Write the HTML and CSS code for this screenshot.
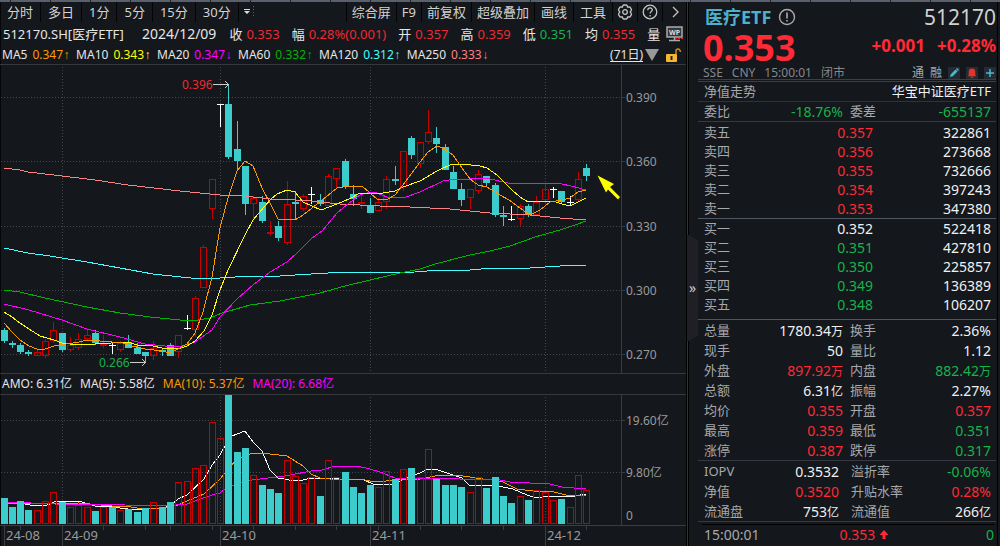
FILE: index.html
```html
<!DOCTYPE html>
<html lang="zh-CN">
<head>
<meta charset="utf-8">
<title>医疗ETF 512170</title>
<link rel="stylesheet" href="styles.css">
</head>
<body>
<div class="strip"></div>
<main class="app">
  <section class="chart">
    <nav class="toolbar">
      <button>分时</button><button>多日</button><button>1分</button><button>5分</button><button>15分</button><button>30分</button>
      <button class="more" aria-label="更多周期"><svg width="12" height="12" viewBox="0 0 12 12"><path d="M0 3h6v1H0zM0 5h6L3 8z" fill="#ddd"/><path d="M9.500 0v12" stroke="#666" stroke-dasharray="1 2"/></svg></button>
      <span class="spacer"></span>
      <button class="tight">综合屏</button><button class="tight">F9</button><button class="tight">前复权</button><button class="tight">超级叠加</button><button class="mid">画线</button><button class="mid">工具</button>
      <button class="tool" aria-label="设置"><svg width="16" height="16" viewBox="0 0 16 16" fill="none" stroke="#c4c4c4" stroke-width="1.300" stroke-linejoin="round"><path d="M5.800 1.800 6.600 1h2.800l.8.800.4 1.400 1.500-.2 1 .2 1.400 2.400-.3 1L13.200 8l1 1.400.3 1-1.400 2.400-1 .2-1.500-.2-.4 1.400-.8.800H6.600l-.8-.8-.4-1.400-1.500.2-1-.2-1.400-2.400.3-1L2.800 8l-1-1.400-.3-1 1.400-2.400 1-.2 1.500.2z"/><circle cx="8" cy="8" r="2.300"/></svg></button>
      <button class="tool" aria-label="帮助"><svg width="16" height="16" viewBox="0 0 16 16" fill="none" stroke="#c4c4c4" stroke-width="1.300"><circle cx="8" cy="8" r="6.800"/><path d="M5.800 6.200c0-3 4.500-3 4.500-.2 0 1.600-2.200 1.600-2.200 3.500M8.100 11v1.500"/></svg></button>
      <button class="tool last" aria-label="展开"><svg width="10" height="12" viewBox="0 0 10 12" fill="none" stroke="#c4c4c4" stroke-width="1.300"><path d="M2 1l5 5-5 5"/></svg></button>
    </nav>
    <div class="quote">
      <span class="code">512170.SH[医疗ETF]</span>
      <span class="date">2024/12/09</span>
      <span>收<b class="up">0.353</b></span>
      <span>幅<b class="up">0.28%(0.001)</b></span>
      <span>开<b class="up">0.357</b></span>
      <span>高<b class="up">0.359</b></span>
      <span>低<b class="down">0.351</b></span>
      <span>均<b class="up">0.355</b></span>
      <span class="amount">量<svg width="18" height="16" viewBox="0 0 18 16"><rect x="1" y="1" width="15" height="10" fill="#33363b" stroke="#aaa" stroke-width="1.500"/><text x="8.500" y="9" class="wp-text">WP</text><path d="M8.500 11v3M3 14.500h11" stroke="#aaa" stroke-width="1.500"/><path d="M9 12.500h8" stroke="#e02020" stroke-dasharray="2 1"/></svg></span>
    </div>
    <div class="averages">
      <span>MA5<b class="c-orange">0.347<i>↑</i></b></span>
      <span>MA10<b class="c-yellow">0.343<i>↑</i></b></span>
      <span>MA20<b class="c-magenta">0.347<i>↓</i></b></span>
      <span>MA60<b class="c-green">0.332<i>↑</i></b></span>
      <span>MA120<b class="c-cyan">0.312<i>↑</i></b></span>
      <span>MA250<b class="c-salmon">0.333<i>↓</i></b></span>
      <a class="range" href="#">(71日)</a>
      <svg width="42" height="16" viewBox="0 0 42 16"><path d="M1 2h14L8 14z" fill="#999"/><rect x="22" y="7" width="11" height="8" rx="1" fill="#f5b731"/><path d="M27.500 9v4" stroke="#222" stroke-width="2"/><path d="M32 7V4q0-2 2-2t2.500 3" fill="none" stroke="#c98d1c" stroke-width="1.500"/></svg>
    </div>
    <svg id="price" class="plot" viewBox="0 0 686 308" role="img" aria-label="日K线"></svg>
    <div class="amounts">
      <span>AMO: 6.31亿</span><span>MA(5): 5.58亿</span><span class="c-orange">MA(10): 5.37亿</span><span class="c-magenta">MA(20): 6.68亿</span>
    </div>
    <svg id="volume" class="plot" viewBox="0 0 686 130" role="img" aria-label="成交额"></svg>
    <svg id="dates" class="plot" viewBox="0 0 686 21" role="img" aria-label="日期"></svg>
  </section>

  <div class="splitter"><button class="fold" aria-label="收起">»</button></div>

  <aside class="side">
    <header class="head">
      <div class="line name-line"><h1>医疗ETF</h1><svg width="18" height="18" viewBox="0 0 18 18" fill="none" stroke="#aaa" stroke-width="1.400"><circle cx="9" cy="9" r="7.500"/><path d="M9 4.500v6M9 12v1.600" stroke-width="1.600"/></svg><span class="symbol">512170</span></div>
      <div class="line price-line"><strong class="last-price">0.353</strong><strong class="change">+0.001</strong><strong class="change">+0.28%</strong></div>
      <div class="line meta-line"><span>SSE</span><span>CNY</span><span>15:00:01</span><span>闭市</span><span class="tag first">通</span><span class="tag">融</span>
        <button class="chip" aria-label="编辑"><svg width="12" height="12" viewBox="0 0 12 12"><path d="M2 10l.8-2.800L7.500 2.500l2 2L4.800 9.200zM8 2l1-1 2 2-1 1z" fill="#43bdd0"/></svg></button>
        <button class="chip" aria-label="提醒"><svg width="12" height="12" viewBox="0 0 12 12"><path d="M6 1.500c2.500 0 3.300 1.700 3.300 3.500v3l1 1.200H1.700L2.700 8V5C2.700 3.200 3.500 1.500 6 1.500zM4.800 9.800h2.400v1H4.800z" fill="#e0352b"/></svg></button>
        <button class="chip" aria-label="添加"><svg width="12" height="12" viewBox="0 0 12 12"><path d="M6 2v8M2 6h8" stroke="#43bdd0" stroke-width="1.500"/></svg></button>
      </div>
    </header>
    <div class="row nav-row"><span>净值走势</span><span class="white">华宝中证医疗ETF</span></div>
    <table class="stats one"><tr><th>委比</th><td class="down">-18.76%</td><th>委差</th><td class="down">-655137</td></tr></table>
    <table class="book">
      <tr><th>卖五</th><td class="up">0.357</td><td>322861</td></tr>
      <tr><th>卖四</th><td class="up">0.356</td><td>273668</td></tr>
      <tr><th>卖三</th><td class="up">0.355</td><td>732666</td></tr>
      <tr><th>卖二</th><td class="up">0.354</td><td>397243</td></tr>
      <tr><th>卖一</th><td class="up">0.353</td><td>347380</td></tr>
    </table>
    <table class="book bids">
      <tr><th>买一</th><td>0.352</td><td>522418</td></tr>
      <tr><th>买二</th><td class="down">0.351</td><td>427810</td></tr>
      <tr><th>买三</th><td class="down">0.350</td><td>225857</td></tr>
      <tr><th>买四</th><td class="down">0.349</td><td>136389</td></tr>
      <tr><th>买五</th><td class="down">0.348</td><td>106207</td></tr>
    </table>
    <table class="stats">
      <tr><th>总量</th><td>1780.34<small>万</small></td><th>换手</th><td>2.36%</td></tr>
      <tr><th>现手</th><td>50</td><th>量比</th><td>1.12</td></tr>
      <tr><th>外盘</th><td class="up">897.92<small>万</small></td><th>内盘</th><td class="down">882.42<small>万</small></td></tr>
      <tr><th>总额</th><td>6.31<small>亿</small></td><th>振幅</th><td>2.27%</td></tr>
      <tr><th>均价</th><td class="up">0.355</td><th>开盘</th><td class="up">0.357</td></tr>
      <tr><th>最高</th><td class="up">0.359</td><th>最低</th><td class="down">0.351</td></tr>
      <tr><th>涨停</th><td class="up">0.387</td><th>跌停</th><td class="down">0.317</td></tr>
    </table>
    <table class="stats fund">
      <tr><th>IOPV</th><td>0.3532</td><th>溢折率</th><td class="down">-0.06%</td></tr>
      <tr><th>净值</th><td class="up">0.3520</td><th>升贴水率</th><td class="up">0.28%</td></tr>
      <tr><th>流通盘</th><td>753<small>亿</small></td><th>流通值</th><td>266<small>亿</small></td></tr>
    </table>
    <div class="tick"><span>15:00:01</span><span class="up tick-price">0.353</span><svg width="10" height="10" viewBox="0 0 10 10"><path d="M5 0l4.500 5H6.500v4h-3V5H.5z" fill="#ff2a35"/></svg><span class="down tick-size">0</span></div>
  </aside>
</main>
<script src="chart.js"></script>
</body>
</html>
```

FILE: styles.css
```css
* { box-sizing: border-box; }
body {
  margin: 0;
  min-height: 100vh;
  background: #14171b;
  color: #e6e6e6;
  font: 13px/20px "Noto Sans", "Noto Sans CJK SC", sans-serif;
}
button {
  margin: 0;
  padding: 0;
  border: 0;
  background: none;
  color: inherit;
  font: inherit;
}
b, i, small { font-weight: 400; font-style: normal; }
svg { display: block; flex: none; }

.up { color: #ff2a35; }
.down { color: #17b34b; }
.white { color: #f0f0f0; }
.c-orange { color: #ff9900; }
.c-yellow { color: #ffff00; }
.c-magenta { color: #ff00ff; }
.c-green { color: #00b400; }
.c-cyan { color: #44ffff; }
.c-salmon { color: #ff8080; }

.strip {
  height: 2px;
  background: repeating-linear-gradient(90deg, #59606b 0 10px, #22262c 10px 11px, #59606b 11px 40px);
}
.app {
  display: grid;
  grid-template-columns: minmax(0, 1fr) 12px 302px;
}
.chart { box-shadow: inset 1px 0 #050607; white-space: nowrap; }

.toolbar { display: flex; height: 20px; overflow: hidden; color: #d2d2d2; }
.toolbar button {
  display: flex;
  align-items: center;
  padding: 0 7px;
  border-right: 1px solid #030405;
  line-height: 20px;
}
.toolbar button.more { padding: 0 5px; border-right: 0; }
.toolbar button.mid { padding: 0 6px; }
.toolbar button.tight { padding: 0 5px; }
.toolbar button.tool { padding: 0 4px; }
.toolbar button.last { padding: 0 5px 0 8px; border-right: 0; }
.spacer { flex: 1; border-right: 1px solid #030405; }

.quote {
  display: flex;
  align-items: center;
  gap: 12px;
  height: 24px;
  padding: 0 2px 0 3px;
  overflow: hidden;
}
.quote b { margin-left: 4px; }
.quote .date { margin: 0 1px 0 6px; font-size: 14px; }
.quote .up { color: #ee2a34; }
.amount { display: flex; align-items: center; gap: 6px; }
.wp-text { font: 700 7px "Noto Sans", sans-serif; fill: #ddd; text-anchor: middle; }

.averages {
  display: flex;
  align-items: center;
  gap: 6px;
  height: 19px;
  padding-left: 2px;
  border-bottom: 1px solid #36383c;
  font-size: 12px;
  line-height: 18px;
}
.averages b { margin-left: 5px; }
.averages i { font-family: "Liberation Sans", sans-serif; display: inline-flex; width: 7px; justify-content: center; }
.range { margin-left: auto; margin-right: -5px; color: #e6e6e6; text-underline-offset: 2px; }

.plot { width: 100%; height: auto; }
.grid { stroke: #45474b; stroke-dasharray: 1 2; }
.axis { stroke: #3a3c41; }
.line-path { fill: none; shape-rendering: crispEdges; }
.bar { shape-rendering: crispEdges; }
.scale { fill: #9a9a9a; font: 12px "Noto Sans", "Noto Sans CJK SC", sans-serif; }
.day { fill: #9a9a9a; font: 13px "Noto Sans", sans-serif; }

.amounts {
  display: flex;
  gap: 8px;
  height: 22px;
  padding-left: 2px;
  border-top: 1px solid #36383c;
  border-bottom: 1px solid #36383c;
  font-size: 12px;
  line-height: 20px;
}

.splitter {
  display: flex;
  align-items: center;
  border-left: 1px solid #000;
  background: linear-gradient(90deg, #34353a 0 1px, #000 1px 2px, #14171b 2px);
}
.fold {
  width: 11px;
  height: 108px;
  margin-top: 28px;
  background: #201f25;
  clip-path: polygon(0 0, 100% 6px, 100% 102px, 0 100%);
  color: #ccc;
  font-size: 14px;
}

.side { padding-right: 1px; margin-right: 2px; border-right: 1px solid #000; color: #a6a8ab; }
.head { padding: 2px 0 0 5px; border-bottom: 3px double #3c3e43; }
.line { display: flex; align-items: center; }
.name-line { height: 25px; padding-left: 2px; gap: 7px; }
h1 { margin: 0; color: #4eb0cc; font-size: 18px; line-height: 24px; }
.symbol { margin-left: auto; color: #d0d0d0; font-size: 21px; }
.price-line { height: 38px; gap: 12px; color: #ff2a35; }
.last-price { margin-right: auto; font-size: 36px; line-height: 38px; }
.change { font-size: 17px; line-height: 30px; padding-bottom: 4px; }
.meta-line { height: 12px; gap: 9px; color: #86888b; font-size: 12px; line-height: 12px; }
.tag { color: #a6a8ab; margin-right: -3px; }
.tag.first { margin-left: auto; }
.tag + .chip { margin-left: 0; }
.chip { width: 12px; height: 12px; margin-left: -3px; background: #262a33; }

.row { display: flex; justify-content: space-between; height: 20px; padding: 0 5px 0 6px; line-height: 19px; border-bottom: 1px solid #303238; }

table { width: 100%; border-collapse: separate; border-spacing: 0; table-layout: fixed; border-bottom: 1px solid #36393f; }
th, td { padding: 0; line-height: 19px; vertical-align: middle; }
th { text-align: left; font-weight: 400; font-size: 13px; }
td { color: #f0f0f0; text-align: right; font-size: 14px; }
td.up { color: #ff2a35; }
td.down { color: #17b34b; }
td small { font-size: 12px; line-height: 12px; }
th:first-child { padding-left: 6px; }
td:last-child { padding-right: 5px; }

.stats th:nth-child(1) { width: 50px; }
.stats th:nth-child(3) { width: 67px; padding-left: 7px; }
.stats td:nth-child(2) { width: 95px; }
.stats tr { height: 20px; }
.stats.one tr { height: 19px; }
.stats.fund th:nth-child(3) { padding-left: 8px; }
.stats.fund td:nth-child(2) { padding-right: 4px; }
.book tr { height: 19px; }
.book { padding-top: 1px; border-bottom-color: #4c5561; }
.bids { padding: 0 0 5px; }
.book th { width: 60px; }
.book td:nth-child(2) { width: 115px; }

.tick {
  display: flex;
  align-items: center;
  height: 21px;
  margin: 2px 2px 0 4px;
  padding-left: 2px;
  border-top: 1px solid #000;
  font-size: 14px;
}
.tick-price { margin: 0 4px 0 80px; }
.tick-size { margin-left: auto; }
```

FILE: chart.js
```js
const NS = 'http://www.w3.org/2000/svg';
const BASE = 129;

// type, high, body top, body bottom, low, volume top
// d = falling, u = rising, w = unchanged
const days = [
  ['d',263,265,276,278,103],['d',276,278,280,283,112],['d',278,280,287,289,106],['d',285,287,289,291,115],
  ['u',284,287,291,291,115],['u',274,276,291,293,106],['u',257,265,276,278,97],['d',268,268,285,287,107],
  ['u',272,280,285,287,112],['u',268,274,283,285,110],['u',264,270,274,276,112],['d',265,268,278,280,116],
  ['u',270,279,280,283,112],['w',278,280,280,289,112,'d'],['u',276,278,285,287,115],['d',270,277,283,283,114],
  ['d',278,283,289,289,117],['d',287,287,291,298,113],['u',276,283,291,295,107],['d',283,285,287,291,112],
  ['d',278,280,291,291,107],['u',270,270,287,293,87],['w',250,263,263,265,86],['u',231,233,265,272,73],
  ['u',180,182,223,223,70],['u',114,114,144,154,27],['w',39,39,39,62,43],['d',19,39,92,94,0],
  ['d',56,84,96,106,57],['d',101,101,139,150,53],['u',131,133,139,157,80],['d',131,137,156,158,90],
  ['u',156,167,169,171,94,'d'],['d',156,161,173,176,98],['u',116,139,178,180,65],['d',126,137,139,154,81,'u'],
  ['u',129,131,144,146,88],['w',122,129,129,139,82],['d',129,135,139,141,101],['u',109,111,141,141,65],
  ['u',103,103,114,123,82],['d',94,96,122,124,77],['d',120,129,134,141,92],['u',130,137,139,144,98,'d'],
  ['d',133,141,148,148,90],['u',133,137,146,146,92],['u',111,114,137,144,76],['d',101,114,116,120,84],
  ['u',86,86,122,126,74],['d',71,73,90,94,73],['u',77,77,99,103,82],['u',45,67,77,79,54],
  ['d',62,73,79,88,84],['d',79,82,105,105,90],['d',101,107,124,124,90],['d',118,124,135,141,92],
  ['u',124,124,133,144,97],['u',105,109,126,129,82],['d',111,111,118,122,93],['d',118,120,150,152,82],
  ['d',141,150,152,161,101],['w',141,154,154,156,108,'d'],['u',139,141,154,161,101],['d',139,141,150,152,105],
  ['u',131,137,150,150,95],['u',119,124,135,139,97],['w',122,124,124,133,105],['d',126,126,137,139,104],
  ['w',131,137,137,141,112],['u',107,114,135,137,80],['d',99,103,111,116,95,'u']
];

const priceLines = {
  '#ff8080': '4,103 20,105 28,107 62,111 95,115 128,120 180,126 200,128 220,130 245,131 270,134 295,135 311,136 340,139 380,141 410,142 450,144 470,146 490,148 530,150 560,153 586,155',
  '#44ffff': '4,183 28,188 50,191 62,193 87,197 120,203 153,209 200,214 220,213 250,211 280,211 311,209 345,207 375,208 415,207 440,205 470,205 492,203 530,203 560,201 586,200',
  '#00b400': '4,225 20,227 45,233 87,242 120,248 150,252 180,255 198,255 210,253 222,248 250,240 280,236 320,228 345,221 370,215 400,208 420,204 435,199 470,190 490,186 510,181 535,172 560,165 575,160 586,156',
  '#ff00ff': '4,239 29,245 62,255 87,264 120,272 145,279 165,281 182,281 195,277 212,265 220,252 237,234 253,220 270,207 287,197 297,188 312,173 322,166 337,148 349,138 360,130 370,127 377,128 387,132 403,133 420,127 443,116 455,114 470,114 485,113 495,115 508,118 528,119 558,118 575,122 586,125',
  '#ffff00': '4,247 12,252 20,258 29,264 40,271 54,275 62,278 79,280 95,279 128,277 137,280 153,281 162,283 178,284 187,281 195,276 204,266 212,250 220,225 228,205 245,170 253,155 270,135 277,129 287,125 295,127 303,137 321,145 337,139 349,134 360,128 377,129 395,126 403,122 420,116 437,106 452,99 462,99 480,101 487,103 497,110 512,125 520,132 528,137 553,136 562,139 570,141 580,136 586,133',
  '#ff9900': '4,258 12,267 20,275 29,281 37,284 45,284 54,281 79,277 87,275 112,277 120,277 128,280 145,284 162,286 170,288 178,284 187,279 195,268 203,247 212,212 220,163 228,133 237,106 245,96 253,101 262,123 270,138 278,154 295,155 303,150 321,136 337,123 349,121 362,121 370,128 378,135 388,134 395,130 403,120 412,108 420,97 428,87 437,81 445,84 453,90 462,103 470,114 478,120 487,122 500,130 509,135 520,143 530,150 540,145 550,137 562,135 570,133 578,127 586,125'
};
const volumeLines = {
  '#ffffff': '8,108 20,108 30,110 45,111 54,107 62,106 79,106 95,111 112,112 128,114 145,114 162,113 170,111 178,104 187,100 204,84 212,70 220,60 225,51 232,41 245,36 253,47 262,56 270,75 278,83 295,86 303,85 311,83 340,84 362,84 373,89 388,90 395,89 403,84 420,78 428,74 438,75 453,80 462,83 470,91 478,90 495,90 503,92 513,94 527,100 537,103 550,101 570,102 580,100 586,99',
  '#ff9900': '8,109 79,108 112,111 125,111 137,113 165,113 178,110 187,106 204,99 220,84 235,66 250,59 262,58 270,59 287,61 303,71 311,79 320,83 340,85 360,84 370,86 378,87 395,85 420,84 440,80 463,81 483,84 495,85 503,87 517,94 533,96 550,96 570,101 586,100',
  '#ff00ff': '8,107 54,109 125,110 165,111 187,109 200,104 212,100 220,98 228,92 245,86 260,84 285,81 311,76 322,75 335,71 357,71 370,74 380,77 395,83 420,84 440,83 460,84 495,84 510,87 530,88 550,89 562,92 586,94'
};
const months = [[62, '24-09'], [220, '24-10'], [370, '24-11'], [545, '24-12']];
const RED = '#c80000', CYAN = '#3ccccc';
const centre = i => Math.floor(4 + 8.324 * i);

function add(svg, tag, attrs, text) {
  const el = document.createElementNS(NS, tag);
  for (const key in attrs) el.setAttribute(key, attrs[key]);
  if (text) el.textContent = text;
  svg.appendChild(el);
}
const fill = (svg, x, y, width, height, color) =>
  add(svg, 'rect', { class: 'bar', x, y, width, height, fill: color });
const hollow = (svg, x, y, width, height) =>
  add(svg, 'rect', { class: 'bar', x: x + 0.5, y: y + 0.5, width: width - 1, height: Math.max(height - 1, 1), fill: 'none', stroke: RED });
const rule = (svg, d, name = 'axis') => add(svg, 'path', { d, class: name, fill: 'none' });
const curves = (svg, set) => {
  for (const color in set) add(svg, 'polyline', { class: 'line-path', points: set[color], stroke: color });
};

function frame(svg, height, levels) {
  months.forEach(([x]) => rule(svg, `M${x + 0.5} 2V${height - 2}`, 'grid'));
  levels.forEach(([y, label]) => {
    rule(svg, `M1 ${y + 0.5}H620`, 'grid');
    rule(svg, `M621 ${y + 0.5}h4`);
    add(svg, 'text', { x: 626, y: y + 5, class: 'scale' }, label);
  });
  rule(svg, `M621.5 0V${height}`);
}

const price = document.getElementById('price');
frame(price, 308, [[32, '0.390'], [96, '0.360'], [161, '0.330'], [225, '0.300'], [289, '0.270']]);
days.forEach(([type, high, top, bottom, low], i) => {
  const x = centre(i);
  if (type === 'u') {
    if (top > high) fill(price, x, high, 1, top - high, RED);
    if (low > bottom) fill(price, x, bottom, 1, low - bottom, RED);
    hollow(price, x - 3, top, 7, bottom - top);
  } else {
    const color = type === 'd' ? CYAN : '#ffffff';
    fill(price, x, high, 1, low - high, color);
    fill(price, x - 3, top, 7, Math.max(bottom - top, 1), color);
  }
});
curves(price, priceLines);
add(price, 'text', { x: 182, y: 24, class: 'scale', style: 'fill:#ee2a34' }, '0.396');
rule(price, 'M213 19.500h15M225 16l3.500 3.500-3.500 3.500', 'mark');
add(price, 'text', { x: 99, y: 302, class: 'scale', style: 'fill:#17b34b' }, '0.266');
rule(price, 'M130 297.500h15M142 294l3.500 3.500-3.500 3.500', 'mark');
price.querySelectorAll('.mark').forEach(el => el.setAttribute('stroke', '#cccccc'));
add(price, 'path', { d: 'M597.500 110.500L614 119l-4 3 10 10-2 2.500-10-10-2 3z', fill: '#ffff00' });

const volume = document.getElementById('volume');
frame(volume, 130, [[25, '19.60亿'], [77, '9.80亿']]);
add(volume, 'text', { x: 626, y: 125, class: 'scale' }, '0');
curves(volume, volumeLines);
days.forEach((day, i) => {
  const top = day[5];
  const kind = day[6] || (day[0] === 'd' ? 'd' : 'u');
  if (kind === 'd') fill(volume, centre(i) - 3, top, 7, BASE - top, CYAN);
  else hollow(volume, centre(i) - 3, top, 7, BASE - top);
});

const dates = document.getElementById('dates');
rule(dates, 'M0 .5H686');
[20, 103, 145, 170, 212, 253, 295, 336, 378, 420, 461, 503, 586].forEach(x => rule(dates, `M${x + 0.5} 1v4`));
[[4, '24-08'], ...months].forEach(([x, label]) => {
  rule(dates, `M${x + 0.5} 1V21`);
  add(dates, 'text', { x: x + 2, y: 15, class: 'day' }, label);
});
```
